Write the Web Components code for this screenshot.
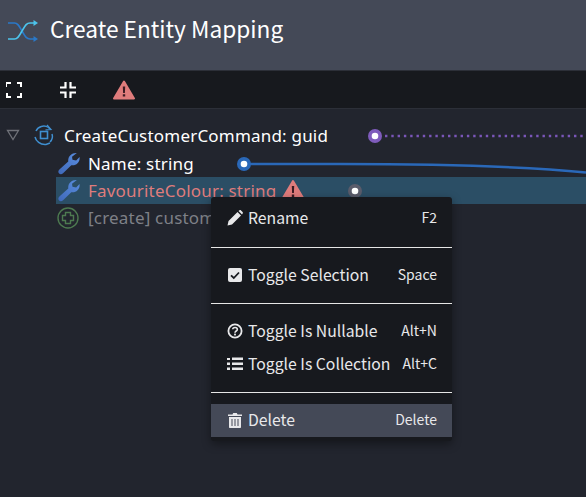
<!DOCTYPE html>
<html><head><meta charset="utf-8"><style>
html,body{margin:0;padding:0;height:100%;background:#22252e;overflow:hidden}
body{font-family:"Noto Sans CJK SC","Noto Sans",sans-serif}
</style></head><body>
<mapping-app></mapping-app>
<template id="t-app"><style>
:host{display:flex;flex-direction:column;width:586px;height:497px;position:relative;overflow:hidden;background:#22252e}
.lines{position:absolute;left:0;top:0;width:586px;height:497px;pointer-events:none}
</style>
<mapping-header>Create Entity Mapping</mapping-header>
<mapping-toolbar></mapping-toolbar>
<mapping-tree></mapping-tree>
<svg class="lines" viewBox="0 0 586 497">
<path d="M385 136H586" stroke="#7a56b8" stroke-width="2.4" stroke-dasharray="2.4 3.9" fill="none"/>
<path d="M244 164H340C440 164 520 166 586 172.500" stroke="#2a68b8" stroke-width="2.6" fill="none"/>
<circle cx="375" cy="136" r="7" fill="#7f5cbc"/><circle cx="375" cy="136" r="3.300" fill="#fff"/>
<circle cx="244" cy="164" r="7" fill="#2a68b8"/><circle cx="244" cy="164" r="3.300" fill="#fff"/>
<circle cx="355" cy="191" r="7" fill="#5a5c6b"/><circle cx="355" cy="191" r="3.300" fill="#fff"/>
</svg>
<context-menu></context-menu>
</template>
<template id="t-header"><style>
:host{display:flex;align-items:center;height:71px;box-sizing:border-box;background:#444957;border-bottom:1px solid #2c2f38;padding:0 0 13px 8px;gap:12px;color:#fff;font:22.7px "Noto Sans CJK SC","Noto Sans",sans-serif;flex:none}
svg{width:30px;height:24px;flex:none;margin-top:4px}
</style>
<svg viewBox="0 0 30 24" fill="none" stroke-width="1.700"><path d="M0 4H6.500C10 4 11 7 14 12" stroke="#2a78c8"/><path d="M14 12C17 17 18 20 22 20H28" stroke="#2a78c8"/><path d="M0 20H6.500C10 20 11 17 14 12" stroke="#4cc4ec"/><path d="M14 12C17 7 18 4 22 4H28" stroke="#4cc4ec"/><path d="M25.500 1L30 4 25.500 7Z" fill="#4cc4ec" stroke="none"/><path d="M25.500 17L30 20 25.500 23Z" fill="#2a78c8" stroke="none"/></svg>
<slot></slot></template>
<template id="t-toolbar"><style>
:host{display:flex;align-items:center;height:38px;box-sizing:border-box;background:#17191e;border-bottom:1px solid #2c2f38;padding:0 0 0 6px;flex:none}
svg{display:block}
.a{width:16px;height:16px;margin-right:38px}
.b{width:16px;height:16px;margin-right:37px}
.w{width:22px;height:20px}
</style>
<svg class="a" viewBox="0 0 16 16" fill="none" stroke="#fff" stroke-width="2"><path d="M0 5V1H5M11 1H15V5M15 11V15H11M5 15H1V11"/></svg>
<svg class="b" viewBox="0 0 16 16" fill="none" stroke="#fff" stroke-width="2.200"><path d="M5.500 0V5.500H0M16 5.500H10.500V0M10.500 16V10.500H16M0 10.500H5.500V16"/></svg>
<svg class="w" viewBox="0 0 22 20"><path d="M11 1.500L21 18.500H1Z" fill="#df7c7c" stroke="#df7c7c" stroke-width="2" stroke-linejoin="round"/><path d="M9.800 6.500H12.200L11.900 13H10.100Z M9.800 14.300H12.200V16.500H9.800Z" fill="#3a1a22"/></svg>
</template>
<template id="t-tree"><style>
:host{display:block;flex:1;padding-top:13px;font:17px "Noto Sans",sans-serif;letter-spacing:.2px}
</style><slot></slot></template>
<template id="t-row"><style>
:host{display:flex;align-items:center;height:27px;box-sizing:border-box;color:#fff;white-space:nowrap;padding-left:var(--pad,0);margin-left:var(--ml,0);background:var(--bg,transparent)}
:host([tone=err]){color:#df7c7c}
:host([tone=dim]){color:#7e8087}
.i{display:flex;align-items:center;justify-content:center;width:24px;height:24px;flex:none;margin-right:8px}
::slotted(svg){display:block}
</style><slot name="pre"></slot><span class="i"><slot name="icon"></slot></span><slot></slot><slot name="post"></slot></template>
<template id="t-menu"><style>
:host{position:absolute;left:211px;top:197px;width:241px;height:244px;box-sizing:border-box;background:#17191e;border-radius:3px;display:block;padding:5px 0 0;box-shadow:0 3px 10px rgba(0,0,0,.4);font:15.75px "Noto Sans CJK SC","Noto Sans",sans-serif;color:#e8e8ea}
</style><slot></slot></template>
<template id="t-item"><style>
:host{display:flex;align-items:center;height:var(--h,33px);box-sizing:border-box;padding:0 15px 2px 16px;background:var(--bg,transparent);white-space:nowrap}
.i{display:flex;width:16px;height:16px;margin-right:5px;align-items:center;justify-content:center;flex:none}
.k{margin-left:auto;font-size:14px;position:relative;top:-1px}
svg{display:block}
</style><span class="i"><slot name="icon"></slot></span><slot></slot><span class="k"><slot name="key"></slot></span></template>
<script>
const def=(n,t)=>customElements.define(n,class extends HTMLElement{constructor(){super();this.attachShadow({mode:'open'}).append(document.getElementById(t).content.cloneNode(true))}});
const wrench=id=>`<svg slot="icon" width="22" height="23" viewBox="0 0 24 24" style="margin-left:2px"><defs><linearGradient id="${id}" x1="0" y1="1" x2="1" y2="0"><stop offset="0" stop-color="#3f68b8"/><stop offset="1" stop-color="#5a8ee0"/></linearGradient></defs><path d="M20.500 .5C14.500 .2 10.500 4.500 11.200 9.800L1.800 18.400C-.2 20.300 .2 22 1.200 23C2.400 24.200 4.200 24 5.500 22.700L14.500 13.800C19.500 14.800 24.300 10.500 23.500 5L19.800 8.800 15.800 8 15.300 4.500Z" fill="url(#${id})"/></svg>`;
def('mapping-header','t-header');def('mapping-toolbar','t-toolbar');def('mapping-row','t-row');def('menu-item','t-item');
customElements.define('mapping-tree',class extends HTMLElement{constructor(){super();this.attachShadow({mode:'open'}).append(document.getElementById('t-tree').content.cloneNode(true));
this.innerHTML=`
<mapping-row style="--pad:6px;height:28px;padding-bottom:2px"><svg slot="pre" width="14" height="12" viewBox="0 0 14 12" style="margin-right:12px"><path d="M1.500 1.500H12.500L7 10.500Z" fill="none" stroke="#6f7178" stroke-width="1.300"/></svg>
<svg slot="icon" width="22" height="22" viewBox="0 0 22 22" fill="none" stroke="#3f8fd0" stroke-width="1.500"><path d="M3 7C5 2.500 11 .5 15.500 3.500L17 5M19 10C20 13 19 16 17 18"/><path d="M2 13C3 17 7 21 13 20.500L17 19"/><path d="M14 1L18 5.500 12.500 5.800" stroke-width="1.200"/><rect x="7.500" y="7.500" width="7" height="7" stroke-width="1.600"/></svg>CreateCustomerCommand: guid</mapping-row>
<mapping-row style="--pad:56px">${wrench('w1')}Name: string</mapping-row>
<mapping-row tone="err" style="--ml:56px;--bg:#2b4e65">${wrench('w2')}FavouriteColour: string<svg slot="post" width="24" height="22" viewBox="0 0 24 22" style="margin:0 0 2px 5px;flex:none"><path d="M12 2L23 20.500H1Z" fill="#df7c7c" stroke="#df7c7c" stroke-width="2" stroke-linejoin="round"/><path d="M10.800 7H13.200L12.900 14H11.100Z M10.800 15.500H13.200V18H10.800Z" fill="#3a1a22"/></svg></mapping-row>
<mapping-row tone="dim" style="--pad:56px"><svg slot="icon" width="22" height="22" viewBox="0 0 22 22" fill="none" stroke="#4d7a50" stroke-width="1.400"><circle cx="11" cy="11" r="10"/><path d="M8.500 5.500H13.500V8.500H16.500V13.500H13.500V16.500H8.500V13.500H5.500V8.500H8.500Z"/></svg>[create] customer</mapping-row>`}});
customElements.define('context-menu',class extends HTMLElement{constructor(){super();this.attachShadow({mode:'open'}).append(document.getElementById('t-menu').content.cloneNode(true));
const g='fill="#e8e8ea"';
this.innerHTML=`<style>hr{border:0;height:1px;background:#e6e6e6;margin:0}</style>
<menu-item>Rename<span slot="key">F2</span><svg slot="icon" width="16" height="16" viewBox="0 0 16 16"><path d="M0.500 15.500L1.500 11 10.500 2 14 5.500 5 14.500Z M11.500 1L12.500.3C13 0 13.500 0 14 .4L15.600 2C16 2.500 16 3 15.700 3.500L15 4.500Z" ${g}/></svg></menu-item>
<hr style="margin-top:12px">
<menu-item style="margin-top:11px">Toggle Selection<span slot="key">Space</span><svg slot="icon" width="14" height="14" viewBox="0 0 14 14"><rect width="14" height="14" rx="2" ${g}/><path d="M3 7.300L5.800 10 11 4.500" fill="none" stroke="#17191e" stroke-width="1.800"/></svg></menu-item>
<hr style="margin-top:11px">
<menu-item style="margin-top:11px">Toggle Is Nullable<span slot="key">Alt+N</span><svg slot="icon" width="16" height="16" viewBox="0 0 16 16"><circle cx="8" cy="8" r="6.600" fill="none" stroke="#e8e8ea" stroke-width="1.800"/><path d="M5.700 6.300C5.900 3.800 10.300 3.800 10.300 6.400 10.300 8 8 8 8 9.800" fill="none" stroke="#e8e8ea" stroke-width="1.600"/><rect x="7.100" y="10.600" width="1.800" height="1.800" ${g}/></svg></menu-item>
<menu-item>Toggle Is Collection<span slot="key">Alt+C</span><svg slot="icon" width="16" height="14" viewBox="0 0 16 14"><path d="M0 1H3V3H0Z M5 0.500H16V3H5Z M0 5.500H3V8H0Z M5 5.500H16V8H5Z M0 10.500H3V13H0Z M5 10.500H16V13H5Z" ${g}/></svg></menu-item>
<hr style="margin-top:11px">
<menu-item style="margin-top:11px;--bg:#444957">Delete<span slot="key">Delete</span><svg slot="icon" width="14" height="16" viewBox="0 0 14 16"><path d="M0 2.500H4.500L5.200 1H8.800L9.500 2.500H14V4H0Z M1 5H13V15C13 15.600 12.600 16 12 16H2C1.400 16 1 15.600 1 15Z" ${g}/><path d="M4 7V14M7 7V14M10 7V14" stroke="#444957" stroke-width="1"/></svg></menu-item>`}});
def('mapping-app','t-app');
</script></body></html>
